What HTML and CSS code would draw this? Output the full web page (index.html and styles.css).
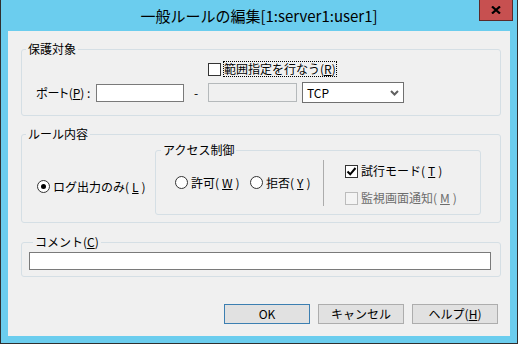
FILE: index.html
```html
<!DOCTYPE html>
<html lang="ja">
<head>
    <meta charset="UTF-8">
    <title>一般ルールの編集</title>
    <link rel="stylesheet" href="styles.css">
</head>
<body>
    <div class="window">
        <div class="titlebar">
            <span class="title">一般ルールの編集[1:server1:user1]</span>
            <span class="close">
                <svg width="10" height="8" viewBox="0 0 10 8"><path d="M1 0.5 L9 7.5 M9 0.5 L1 7.5" stroke="#000" stroke-width="2.2"/></svg>
            </span>
        </div>

        <div class="client">
            <fieldset class="group">
                <legend>保護対象</legend>
                <div class="port-grid">
                    <label class="check range-check">
                        <span class="box"></span>
                        <span class="focus">範囲指定を行なう(<u>R</u>)</span>
                    </label>
                    <span class="port-label">ポート(<u>P</u>) :</span>
                    <span class="field"></span>
                    <span class="dash">-</span>
                    <span class="field disabled"></span>
                    <span class="combo">
                        TCP
                        <svg width="9" height="6" viewBox="0 0 9 6"><path d="M1 1 L4.5 4.5 L8 1" fill="none" stroke="#606060" stroke-width="2"/></svg>
                    </span>
                </div>
            </fieldset>

            <fieldset class="group rule">
                <legend>ルール内容</legend>
                <div class="rule-body">
                    <div class="log-only">
                        <label class="radio"><span class="circle on"></span>ログ出力のみ(<u>L</u>)</label>
                    </div>
                    <fieldset class="group access">
                        <legend>アクセス制御</legend>
                        <div class="access-body">
                            <label class="radio allow"><span class="circle"></span>許可(<u>W</u>)</label>
                            <label class="radio deny"><span class="circle"></span>拒否(<u>Y</u>)</label>
                            <span class="separator"></span>
                            <div class="mode-col">
                                <label class="check"><span class="box checked">
                                    <svg width="11" height="11" viewBox="0 0 11 11"><path d="M1.5 5.5 L4.2 8.3 L9.5 2" fill="none" stroke="#000" stroke-width="2"/></svg>
                                </span>試行モード(<u>T</u>)</label>
                                <label class="check off"><span class="box"></span>監視画面通知(<u>M</u>)</label>
                            </div>
                        </div>
                    </fieldset>
                </div>
            </fieldset>

            <fieldset class="group comment">
                <legend>コメント(<u>C</u>)</legend>
                <span class="field wide"></span>
            </fieldset>

            <div class="buttons">
                <button class="btn default">OK</button>
                <button class="btn">キャンセル</button>
                <button class="btn">ヘルプ(<u>H</u>)</button>
            </div>
        </div>
    </div>
</body>
</html>
```

FILE: styles.css
```css
* {
    box-sizing: border-box;
}
body {
    margin: 0;
    font-family: "Noto Sans CJK JP", "Noto Sans", sans-serif;
    font-size: 12px;
    line-height: 16px;
    color: #000;
    background: #fff;
}
u {
    text-decoration-thickness: 1px;
    text-underline-offset: 1px;
}
.window {
    position: relative;
    width: 518px;
    height: 344px;
    background: #6bcdee;
    border: 1px solid #2f2f2f;
    border-top: none;
    padding: 0 7px 7px;
    display: flex;
    flex-direction: column;
}
.titlebar {
    height: 31px;
    display: flex;
    align-items: center;
    justify-content: center;
}
.title {
    font-size: 15px;
    line-height: 20px;
    margin-top: 1px;
}
.close {
    position: absolute;
    top: 0;
    left: 478px;
    width: 34px;
    height: 21px;
    background: #c75050;
    border: 1px solid #5a2a2a;
    border-top: none;
    display: flex;
    align-items: center;
    justify-content: center;
}
.client {
    flex: 1;
    background: #f0f0f0;
    padding: 10px 9px 12px 13px;
    display: flex;
    flex-direction: column;
}
.group {
    margin: 0;
    padding: 0;
    min-width: 0;
    border: 1px solid #d5dfe5;
    border-radius: 3px;
}
.group legend {
    margin-left: 4px;
    padding: 0 2px;
    line-height: 16px;
}

/* protected target */
.port-grid {
    display: grid;
    grid-template-columns: 60px 88px 24px 94px 102px;
    grid-template-rows: 16px 21px;
    grid-auto-flow: column;
    row-gap: 5px;
    padding: 4px 0 12px 14px;
    align-items: center;
}
.port-grid > * {
    grid-row: 2;
}
.port-grid > .range-check {
    grid-column: 4 / span 2;
    grid-row: 1;
}
.focus {
    outline: 1px dotted #000;
    line-height: 14px;
}
.port-label {
    white-space: nowrap;
    font-feature-settings: "palt";
}
.field {
    display: block;
    width: 88px;
    height: 18px;
    background: #fff;
    border: 1px solid #7a7a7a;
}
.field.disabled {
    width: 89px;
    height: 19px;
    background: #f0f0f0;
    border-color: #b5b9bb;
}
.dash {
    text-align: center;
}
.combo {
    height: 21px;
    background: #fff;
    border: 1px solid #707070;
    display: flex;
    align-items: center;
    justify-content: space-between;
    padding: 0 4px 0 4px;
}

/* checkboxes and radios */
.check, .radio {
    display: inline-flex;
    align-items: center;
    gap: 3px;
    white-space: nowrap;
}
.box {
    width: 13px;
    height: 13px;
    flex: none;
    background: #fff;
    border: 1px solid #333;
    display: flex;
    align-items: center;
    justify-content: center;
}
.check.off {
    color: #6d6d6d;
}
.check.off .box {
    background: #f4f4f4;
    border-color: #bcbcbc;
}
.circle {
    width: 13px;
    height: 13px;
    flex: none;
    border: 1px solid #333;
    border-radius: 50%;
    background: #fff;
    display: flex;
    align-items: center;
    justify-content: center;
}
.circle.on::after {
    content: "";
    width: 5px;
    height: 5px;
    border-radius: 50%;
    background: #000;
}

/* rule content */
.rule {
    margin-top: 10px;
}
.rule-body {
    display: flex;
    padding-bottom: 7px;
}
.log-only {
    width: 133px;
    padding: 34px 0 0 15px;
}
.access {
    width: 326px;
}
.access legend {
    margin-left: 5px;
}
.access-body {
    display: flex;
    align-items: center;
    padding: 1px 0 8px 19px;
}
.allow {
    width: 75px;
}
.deny {
    width: 73px;
}
.separator {
    width: 1px;
    height: 46px;
    background: #acacac;
}
.mode-col {
    align-self: flex-start;
    margin: 4px 0 0 21px;
    display: flex;
    flex-direction: column;
    gap: 11px;
}

/* comment */
.comment {
    margin-top: 11px;
    padding: 2px 9px 6px 7px;
}
.field.wide {
    width: auto;
}

/* buttons */
.buttons {
    margin-top: auto;
    display: flex;
    justify-content: flex-end;
    gap: 8px;
    padding-right: 3px;
}
.btn {
    width: 86px;
    height: 20px;
    padding: 0;
    font: inherit;
    line-height: 18px;
    color: #000;
    background: #e1e1e1;
    border: 1px solid #adadad;
    border-radius: 0;
}
.btn.default {
    border-color: #3c7fb1;
}
```
